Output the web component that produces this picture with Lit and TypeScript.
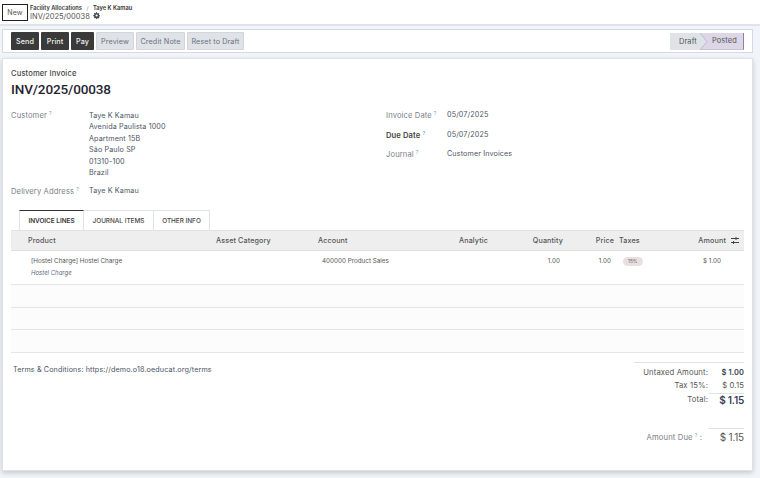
import { LitElement, html, css } from "lit";
import { customElement } from "lit/decorators.js";

const q = html`<sup class="q">?</sup>`;

@customElement("app-root")
export class AppRoot extends LitElement {
  static styles = css`
    :host { display: block; width: 760px; height: 478px; overflow: hidden; background: #f1f4f9; font-family: Inter, "Noto Sans", sans-serif; font-size: 7.4px; color: #374151; box-sizing: border-box; letter-spacing: .12px; }
    * { box-sizing: border-box; }
    .top { height: 26px; background: #fff; border-bottom: 2px solid #dfe3ec; display: flex; align-items: flex-start; padding: 3px 0 0 2px; gap: 2px; }
    .new { width: 26px; height: 17px; border: 1px solid #222; background: #fff; font-size: 7px; color: #555; display: flex; align-items: center; justify-content: center; margin-top: 1px; }
    .crumbs { display: flex; flex-direction: column; }
    .bc { font-size: 5.7px; font-weight: 600; color: #333; height: 9px; line-height: 8px; white-space: nowrap; letter-spacing: 0; padding-top: .5px; }
    .bc i { font-style: normal; color: #888; font-weight: 400; padding: 0 4.5px; }
    .rec { display: flex; align-items: flex-start; gap: 3px; font-size: 7.5px; color: #555; line-height: 10px; letter-spacing: 0; }
    .panel { height: 24px; margin: 3px 0 0 2px; width: 751px; background: #fff; border: 1px solid #d5d9e3; display: flex; align-items: center; justify-content: space-between; padding: 0 8px; }
    .btns { display: flex; gap: 2px; }
    .btn { height: 18px; display: flex; align-items: center; justify-content: center; font-size: 7.2px; border-radius: 1px; font-weight: 500; white-space: nowrap; }
    .w28 { width: 28px; } .w23 { width: 23px; } .w38 { width: 38px; } .w49 { width: 49px; } .w57 { width: 57px; }
    .dark { background: #3a3a3a; color: #f1f1f1; }
    .light { background: #dfe2e7; color: #6a7280; border: 1px solid #d2d5da; font-weight: 400; }
    .status { display: flex; height: 17px; background: #dfe2e7; font-size: 7.4px; color: #555; }
    .status span { display: flex; align-items: center; }
    .draft { width: 30px; padding-left: 9px; }
    .posted { position: relative; width: 44px; padding-left: 12px; background: #dcd6e6; border-right: 1px solid #8d7fa8; border-bottom: 1px solid #cbc3da; }
    .arrow { position: absolute; left: 0; top: 0; }
    .sheet { margin: 5px 0 0 2px; width: 751px; height: 413px; background: #fff; border: 1px solid #dee1e7; box-shadow: 0 2px 5px rgba(0,0,0,.18); padding: 10px 8px 0 8px; display: flex; flex-direction: column; }
    .kind { font-size: 7.6px; color: #444; font-weight: 500; line-height: 10px; }
    h1 { margin: 2px 0 0; font-family: Roboto, sans-serif; font-size: 13.5px; line-height: 17px; font-weight: 500; color: #1f2530; letter-spacing: -.13px; }
    .info { display: grid; grid-template-columns: 375px 1fr; margin-top: 12px; height: 93px; }
    .col { display: flex; flex-direction: column; }
    .f { display: flex; }
    .l { color: #7a7f88; font-size: 7.6px; }
    .left .l { width: 78px; line-height: 11px; }
    .right .l { width: 61px; }
    .strong { color: #444; font-weight: 600; }
    .q { color: #6fa8bd; font-size: 5px; line-height: 0; margin-left: 2px; vertical-align: 3px; }
    .v { font-size: 7.2px; color: #4b5563; line-height: 11.4px; }
    .deliv { margin-top: 7px; }
    .deliv .l { padding-top: 1px; }
    .right { gap: 8.6px; }
    .right .f { height: 11px; line-height: 11px; }
    .right .v { margin-top: -1px; }
    .tabs { display: flex; margin: 7px 0 0 8px; height: 20px; }
    .tab { height: 20px; display: flex; align-items: center; justify-content: center; font-size: 6.4px; font-weight: 500; color: #444; border: 1px solid #dfe2e7; border-bottom: none; border-left: none; white-space: nowrap; letter-spacing: 0; }
    .tab.on { color: #333; font-weight: 600; border-top: 1px solid #333; border-left: 1px solid #dfe2e7; width: 65px; }
    .t2 { width: 70px; } .t3 { width: 56px; }
    .g { display: grid; grid-template-columns: 188px 102px 141px 44px 60px 51px 5px 107px 18px; }
    .g > div { white-space: nowrap; }
    .head { height: 21px; align-items: center; background: #eeeeee; border-top: 1px solid #e2e2e2; border-bottom: 1px solid #dfdfdf; font-size: 7.2px; font-weight: 500; color: #555; padding-left: 17px; }
    .r { text-align: right; }
    .split { display: flex; justify-content: space-between; align-items: center; }
    .row { height: 34px; border-bottom: 1px solid #e2e4e8; font-size: 6.3px; letter-spacing: 0; color: #555; padding: 6px 0 0 17px; line-height: 9px; align-items: start; }
    .desc { display: flex; flex-direction: column; padding-left: 3px; gap: 2px; }
    .desc em { font-size: 6px; color: #5d6a80; }
    .acc { padding-left: 4px; }
    .pr { padding-right: 3px; }
    .tax { display: inline-block; margin-left: 4px; background: #e9dfdf; border-radius: 5px; font-size: 4.8px; padding: 2px 5px; line-height: 5px; color: #666; }
    .amt { padding-right: 5px; }
    .empty { height: 22.6px; border-bottom: 1px solid #e2e4e8; background: #fcfcfc; }
    .foot { display: flex; justify-content: space-between; flex: 1; padding-top: 9px; }
    .terms { padding-left: 2px; font-size: 7.2px; color: #4b5563; line-height: 16px; }
    .totals { width: 110px; border-top: 1px solid #dfe2e7; padding-top: 3px; font-size: 7.7px; color: #555; text-align: right; }
    .t { display: grid; grid-template-columns: 74px 36px; align-items: center; height: 13px; }
    .t b { font-weight: 600; color: #374151; font-size: 7.4px; }
    .sum { height: 15px; }
    .sum .big { font-size: 10px; font-weight: 600; color: #374151; border-top: 1px solid #dfe2e7; letter-spacing: -.2px; }
    .due { margin-top: 21px; height: 19px; }
    .due .big { font-size: 10px; color: #555; font-weight: 400; border-top: 1px solid #dfe2e7; line-height: 17px; letter-spacing: -.2px; }
    .due .lab { color: #7a7f88; padding-right: 6px; margin-left: -6px; white-space: nowrap; }
    svg { display: block; }
  `;

  render() {
    return html`
      <div class="top">
        <div class="new">New</div>
        <div class="crumbs">
          <div class="bc">Facility Allocations<i>/</i>Taye K Kamau</div>
          <div class="rec">INV/2025/00038
            <svg width="7" height="7" viewBox="0 0 16 16" fill="#3f4a58"><path d="M9.4 1l.4 2 1.5.6 1.7-1.1 1.5 1.5-1.1 1.7.6 1.5 2 .4v2.1l-2 .4-.6 1.5 1.1 1.7-1.5 1.5-1.7-1.1-1.5.6-.4 2H7.3l-.4-2-1.5-.6-1.7 1.1-1.5-1.5 1.1-1.7-.6-1.5-2-.4V6.700l2-.4.6-1.5-1.100-1.700 1.500-1.500 1.700 1.100 1.500-.6.4-2zM8.300 5.500a2.500 2.500 0 100 5 2.500 2.500 0 000-5z"/></svg>
          </div>
        </div>
      </div>
      <div class="panel">
        <div class="btns">
          <div class="btn dark w28">Send</div><div class="btn dark w28">Print</div><div class="btn dark w23">Pay</div>
          <div class="btn light w38">Preview</div><div class="btn light w49">Credit Note</div><div class="btn light w57">Reset to Draft</div>
        </div>
        <div class="status">
          <span class="draft">Draft</span>
          <span class="posted">
            <svg class="arrow" width="8" height="17" viewBox="0 0 8 17"><path d="M0 0L7 8.500L0 17Z" fill="#dfe2e7"/><path d="M0 0L7 8.500L0 17" fill="none" stroke="#b5adc6" stroke-width=".7"/></svg>
            Posted
          </span>
        </div>
      </div>
      <div class="sheet">
        <div class="kind">Customer Invoice</div>
        <h1>INV/2025/00038</h1>
        <div class="info">
          <div class="col left">
            <div class="f">
              <div class="l">Customer${q}</div>
              <div class="v">Taye K Kamau<br />Avenida Paulista 1000<br />Apartment 15B<br />São Paulo SP<br />01310-100<br />Brazil</div>
            </div>
            <div class="f deliv"><div class="l">Delivery Address${q}</div><div class="v">Taye K Kamau</div></div>
          </div>
          <div class="col right">
            <div class="f"><div class="l">Invoice Date${q}</div><div class="v">05/07/2025</div></div>
            <div class="f"><div class="l strong">Due Date${q}</div><div class="v">05/07/2025</div></div>
            <div class="f"><div class="l">Journal${q}</div><div class="v">Customer Invoices</div></div>
          </div>
        </div>
        <div class="tabs">
          <div class="tab on">INVOICE LINES</div><div class="tab t2">JOURNAL ITEMS</div><div class="tab t3">OTHER INFO</div>
        </div>
        <div class="g head">
          <div>Product</div><div>Asset Category</div><div>Account</div><div>Analytic</div>
          <div class="r">Quantity</div><div class="r">Price</div><div></div>
          <div class="split"><span>Taxes</span><span>Amount</span></div>
          <div class="split">
            <span></span>
            <svg width="8" height="7" viewBox="0 0 8 7" stroke="#444" stroke-width="1"><path d="M0 1.500h8M0 5.500h8"/><path d="M5 0v3M2.500 4v3"/></svg>
            <span></span>
          </div>
        </div>
        <div class="g row">
          <div class="desc"><span>[Hostel Charge] Hostel Charge</span><em>Hostel Charge</em></div>
          <div></div><div class="acc">400000 Product Sales</div><div></div>
          <div class="r pr">1.00</div><div class="r pr">1.00</div><div></div>
          <div class="split amt"><span class="tax">15%</span><span>$ 1.00</span></div><div></div>
        </div>
        <div class="empty"></div><div class="empty"></div><div class="empty"></div>
        <div class="foot">
          <div class="terms">Terms &amp; Conditions: https://demo.o18.oeducat.org/terms</div>
          <div class="totals">
            <div class="t"><span>Untaxed Amount:</span><b>$ 1.00</b></div>
            <div class="t"><span>Tax 15%:</span><span>$ 0.15</span></div>
            <div class="t sum"><span>Total:</span><span class="big">$ 1.15</span></div>
            <div class="t due"><span class="lab">Amount Due${q} :</span><span class="big">$ 1.15</span></div>
          </div>
        </div>
      </div>
    `;
  }
}
